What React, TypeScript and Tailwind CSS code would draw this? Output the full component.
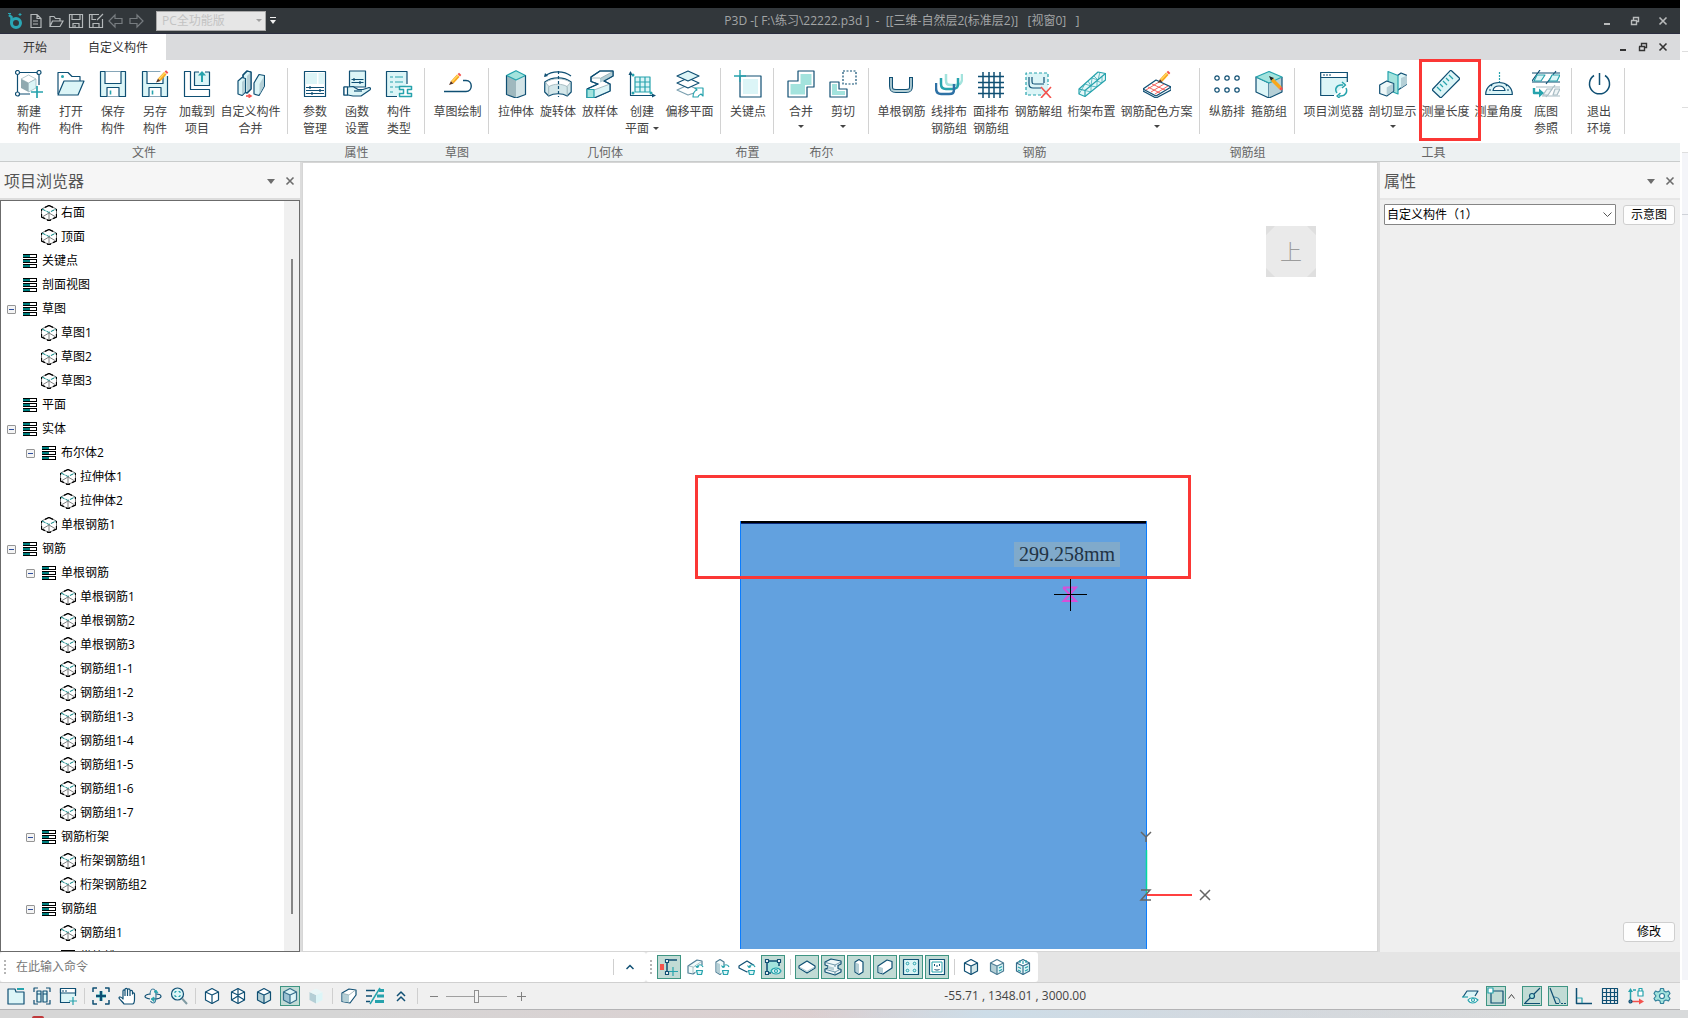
import { useState } from "react";
import type { ReactNode } from "react";
import clsx from "clsx";

const NAVY = "#0f4f73";
const TEAL = "#26a3ad";
const PALE = "#dcf5f7";
const MINT = "#a3e3dd";
const SHADE = "#b4cfd6";
const RED = "#f4524d";
const EDGE = "#8fa9b0";

type SvgProps = { size?: number; children: ReactNode };

const Svg = ({ size = 28, children }: SvgProps) => (
  <svg
    width={size}
    height={size}
    viewBox={`0 0 ${size} ${size}`}
    fill="none"
    stroke={NAVY}
    strokeWidth={1.2}
    strokeLinejoin="round"
    aria-hidden="true"
    className="shrink-0"
  >
    {children}
  </svg>
);

const Pencil = ({ x, y }: { x: number; y: number }) => (
  <g transform={`translate(${x} ${y})`} stroke="none">
    <path d="M0 12l2-4 2.500 2.500z" fill="#5b3524" />
    <path d="M2 8l6-6.500 2.500 2.500-6 6.500z" fill="#f9a61a" />
    <path d="M2.700 8l6-6.500 1 1-6 6.500z" fill="#ffd560" />
    <path d="M8.600 1l1.500-1.200 2.200 2.200-1.300 1.500z" fill={RED} />
  </g>
);

/* ---------- ribbon icons, 28 x 28 ---------- */

const SaveShape = () => (
  <>
    <path d="M1.500 1.500h25v25h-25z" fill={PALE} />
    <path d="M6 1.500v12h16v-12" fill="#fff" />
    <path d="M8 26.500v-9h12v9" fill="#fff" />
    <path d="M11.500 20.500v4" stroke={TEAL} strokeWidth={1.600} />
  </>
);

const ribbonIcons: Record<string, ReactNode> = {
  create: (
    <>
      <path d="M4.500 2.500h17.500M2.500 4.500v17.500M24 4.500V15M4.500 24H15" />
      <circle cx="2.500" cy="2.500" r="2" fill="#fff" />
      <circle cx="24" cy="2.500" r="2" fill="#fff" />
      <circle cx="2.500" cy="24" r="2" fill="#fff" />
      <path d="M6 9l7.500-4L21 9l-7.500 4z" fill="#fff" stroke="#9ab3ba" strokeWidth={0.700} />
      <path d="M6 9l7.500 4v9L6 18z" fill={EDGE} stroke="none" />
      <path d="M21 9l-7.500 4v9l7.500-4z" fill={PALE} stroke="#9ab3ba" strokeWidth={0.700} />
      <path d="M22 16v12M16 22h12" stroke={TEAL} strokeWidth={1.700} />
    </>
  ),
  open: (
    <>
      <path d="M1 24V2.500h10l4 4h8V11" fill="#fff" />
      <path d="M7 11h20l-6 14H1z" fill={PALE} />
      <circle cx="5.500" cy="6.500" r="1.500" fill={TEAL} stroke="none" />
    </>
  ),
  save: <SaveShape />,
  saveAs: (
    <>
      <SaveShape />
      <path d="M15 12l5-6h8V0h-8z" fill="#fff" stroke="none" />
      <Pencil x={15} y={0.500} />
    </>
  ),
  load: (
    <>
      <path d="M1.500 1.500h6v18h19v7h-25z" fill="#fff" />
      <path d="M16 2h-4.500v13.500h15V2H22" fill={PALE} />
      <path d="M19 12V4" stroke={TEAL} strokeWidth={2} />
      <path d="M15 5.500L19 1l4 4.500z" fill={TEAL} stroke="none" />
    </>
  ),
  combine: (
    <>
      <path d="M6 5l4-4 4 1v17l-4 4-4-1z" fill={PALE} />
      <path d="M10 6l4-4v17l-4 4z" fill={SHADE} stroke="none" />
      <path d="M6 5l4-4 4 1v17l-4 4-4-1z" />
      <path d="M1 11l4-3.500 3.500 1V22L5 25.500 1 24z" fill={PALE} />
      <path d="M5 12l3-3v13l-3 3z" fill={SHADE} stroke="none" />
      <path d="M17 13l5-8.500 5.500 1V16L22 25.500 17 24z" fill={PALE} />
      <path d="M22.500 14l4.500-7.500V16l-4.500 8.500z" fill={SHADE} stroke="none" />
      <path d="M9 26h4" stroke={RED} strokeWidth={1.600} />
      <path d="M11.500 23.500l4 2.500-4 2.500z" fill={RED} stroke="none" />
    </>
  ),
  params: (
    <>
      <path d="M3.500 1.500h21v25h-21z" fill="#fff" />
      <path d="M5 3h11v11H5zM17.500 3H23v11h-5.500z" fill={PALE} stroke="none" />
      <path d="M5 17.500h18M5 20.500h18M5 23.500h18M9 16v3M19 19v3M11 22v3" />
    </>
  ),
  func: (
    <>
      <path d="M6.500 1h16v16h-16z" fill={PALE} />
      <path d="M8.500 9.500h12M8.500 12.500h12M11 8v3M17 11v3" />
      <path d="M1 17h4l5-.500 5 3h5l6-2c2 0 2 2 0 3l-8 5.500H10L5 25H1z" fill={PALE} />
      <path d="M11 21h8" />
      <path d="M1 17h3.500v8H1z" fill="#fff" />
    </>
  ),
  types: (
    <>
      <path d="M22 14V1.500H1.500v25H12" fill={PALE} />
      <path d="M5 7h3M5 12h3M5 17h3M5 22h3M10 7h8M10 12h8M10 17h4" stroke={TEAL} />
      <path d="M14.500 16.500h12v3h-4v4h4v3h-12v-3h4v-4h-4z" fill="#fff" stroke={TEAL} strokeWidth={1.500} />
    </>
  ),
  sketch: (
    <>
      <path d="M0 21.500h22c7 0 7-11 0-11h-3" strokeWidth={1.400} />
      <Pencil x={5} y={3} />
    </>
  ),
  extrude: (
    <>
      <path d="M4.500 5.500L14 10v18.500l-9.500-4.500z" fill="#9fb8be" stroke="none" />
      <path d="M23.500 5.500L14 10v18.500l9.500-4.500z" fill="#d3e4e7" stroke="none" />
      <path d="M4.500 5.500L14 .700l9.500 4.800L14 10z" fill={MINT} stroke={TEAL} />
      <path d="M4.500 5.500v19L14 28l9.500-3.500v-19" />
    </>
  ),
  revolve: (
    <>
      <path d="M1 6C8 .500 20 .500 27 6" />
      <path d="M0 7l1-4 3 3z" fill={NAVY} stroke="none" />
      <path d="M.800 12C8 6.500 20 6.500 27.200 12v10l-4 4c-5-3-13-3-18.500 0l-4-4z" fill="#d4e7ea" />
      <path d="M1.500 12.500l3.500 4c5-3 13-3 18 0l3.500-4C20 7.500 8 7.500 1.500 12.500z" fill="#fff" stroke={EDGE} strokeWidth={0.700} />
      <path d="M4.700 16.500V26M23.200 16.500V26" stroke={EDGE} strokeWidth={0.800} />
      <path d="M14.500 1v26" strokeDasharray="3 2" />
    </>
  ),
  loft: (
    <>
      <path d="M1 19L12 14 5 11.500V7L14 1h13v5l-9 5 6 3v7L8 28H1z" fill="#fff" />
      <path d="M8 20l16-6v7L8 28z" fill={PALE} stroke="none" />
      <path d="M27 1.500L14 8.500v4l4-1.500 9-5z" fill={SHADE} stroke="none" />
      <path d="M8 20l16-6M14 8.500L27 1.500M5 8h9" stroke={EDGE} strokeWidth={0.800} />
      <path d="M1 19L12 14 5 11.500V7L14 1h13v5l-9 5 6 3v7L8 28" />
      <path d="M1 19.500h7v8H1z" fill={MINT} stroke={TEAL} />
    </>
  ),
  plane: (
    <>
      <path d="M2.500 2v23.500H27" />
      <path d="M.500 5l2-4 2 4zM24 23.500l4 2-4 2z" fill={NAVY} stroke="none" />
      <path d="M7 7h15v15H7z" fill={PALE} stroke="none" />
      <path d="M7 7h15v15H7zM12 7v15M17 7v15M7 12h15M7 17h15" stroke={TEAL} />
      <circle cx="5" cy="5" r="1.500" fill={TEAL} stroke="none" />
      <circle cx="5" cy="23" r="1.500" fill={TEAL} stroke="none" />
      <circle cx="23" cy="23" r="1.500" fill={TEAL} stroke="none" />
    </>
  ),
  offset: (
    <>
      <path d="M1 20l11-5 11 5-5 3-6 2z" fill="#fff" stroke="#7ba0b0" />
      <path d="M1 13l11-5 11 5-11 5z" fill="#fff" />
      <path d="M1 6l11-5 11 5-11 5z" fill={PALE} />
      <path d="M17 27c0-4 1-6 4-7l-2-2h8v8l-2-2c-2 1-3 2-3 3z" fill="#fff" stroke={TEAL} />
    </>
  ),
  keypoint: (
    <>
      <path d="M6 6h21v21H6z" fill="#fff" />
      <path d="M9 9h15v15H9z" fill={PALE} stroke="none" />
      <path d="M6 0v12M0 6h12" stroke={TEAL} strokeWidth={1.400} />
    </>
  ),
  union: (
    <>
      <path d="M11 1h16v16h-7v10H1V11h10z" fill="#fff" />
      <path d="M13.500 4h11v11H18v9.500H3.500V14h10z" fill={MINT} stroke="none" />
    </>
  ),
  subtract: (
    <>
      <path d="M14 1h13v13H14z" strokeDasharray="2 1.500" />
      <path d="M1 12h9v7h8v8H1z" fill="#fff" />
      <path d="M3 14h5v7h8v4H3z" fill={MINT} stroke="none" />
    </>
  ),
  singleBar: (
    <>
      <path d="M3 7v9c0 4 1 5 5 5h10c4 0 5-1 5-5V7" strokeWidth={4} />
      <path d="M3 8v8c0 4 1 5 5 5h10c4 0 5-1 5-5V8" stroke={SHADE} strokeWidth={1.800} />
    </>
  ),
  lineBars: (
    <>
      <path d="M11 4v6c0 4 1 5 5 5h4c5 0 6-1 7-5V4" stroke={MINT} strokeWidth={2.500} />
      <path d="M6 8v6c0 4 2 5 5 5h6c4 0 6-1 6-5V8" stroke={TEAL} strokeWidth={2.500} />
      <path d="M1 13v5c0 4 2 6 5 6h8c4 0 5-1 5-5v-5" stroke="#2d71a5" strokeWidth={2.500} />
    </>
  ),
  gridBars: (
    <path
      d="M6 2v26M12 2v26M17 2v26M23 2v26M1 6.500h26M1 12.500h26M1 17.500h26M1 23.500h26"
      strokeWidth={1.500}
    />
  ),
  ungroup: (
    <>
      <path d="M1 3h22v22H1z" fill={PALE} stroke="none" />
      <path d="M16 25H1V3h22v12" stroke={TEAL} strokeDasharray="3 2" />
      <path d="M4 7v7c0 3 1 4 4 4h8M7 7v4c0 3 1 3 3 3h9M19 7v6" />
      <path d="M16 17l10 11M26 17L16 28" stroke={RED} strokeWidth={1.600} />
    </>
  ),
  truss: (
    <>
      <path d="M1 19L20 2l7.500 1.500V10L7 26.500 1 24z" fill="#e6f7f8" stroke={TEAL} />
      <path d="M1 19l6 1.500L27.500 3.500M7 20.500v6" stroke={TEAL} />
      <path
        d="M7 20.500l6 1.500v-6l6 1v-6l5 2V7M1 24l6-10 6 2 1-8 6 2 2-8M10 11l3 5M16 6l4 4"
        stroke={TEAL}
        strokeWidth={0.700}
      />
    </>
  ),
  palette: (
    <>
      <path d="M0 19l13-9 15 7v3L13 28 0 21z" fill="#fff" />
      <path d="M0 19l13 7 15-9" />
      <path d="M5 17l12 6M9 14l13 6M3 20l13-8M8 22l13-8M12 24l13-8" stroke={RED} strokeWidth={0.900} />
      <Pencil x={15} y={1} />
    </>
  ),
  barRow: (
    <>
      {[4, 14, 24].map((x) => (
        <g key={x}>
          <circle cx={x} cy="8" r="2.200" />
          <circle cx={x} cy="20" r="2.200" />
        </g>
      ))}
    </>
  ),
  stirrup: (
    <>
      <path d="M1 7v15l13 6V13z" fill={PALE} />
      <path d="M27 7v15l-13 6V13z" fill={SHADE} stroke="none" />
      <path d="M27 7v15l-13 6" />
      <path d="M1 7l13-5.500L27 7l-13 6z" fill={MINT} stroke={TEAL} />
      <path d="M14 6l2 5 3-3z" fill="#222" stroke="none" />
      <path d="M16 11l8 8 2.500-2.500-8-8z" fill="#f9a61a" stroke="none" />
      <path d="M24 19l2.500-2.500L28 19l-2 1.500z" fill={RED} stroke="none" />
    </>
  ),
  browser: (
    <>
      <path d="M14 25.500H.700V2.500h26.600V12" fill={PALE} />
      <path d="M.700 2.500h26.600v5H.700z" fill="#fff" />
      <path d="M3 5h2M6 5h2M9 5h2" />
      <path d="M17 23c-3-4 0-8 4-8h2M26 18c2 4-1 8-5 8h-2" stroke={TEAL} strokeWidth={1.500} />
      <path d="M22 12l3.500 3-3.500 3M20.500 23L17 26l3.500 3" stroke={TEAL} strokeWidth={1.500} />
    </>
  ),
  section: (
    <>
      <path d="M15 8l7-5 6 2.500V14l-9 6-4-2z" fill={PALE} />
      <path d="M22 8l6-2.500V14l-6 4z" fill={SHADE} stroke="none" />
      <path d="M9 1.500l10 4V24L9 20z" fill={MINT} stroke={TEAL} />
      <path d="M.700 15l7-4 7 2.500V21l-7 5-7-2.500z" fill="#eef7f8" />
      <path d="M7.700 17.500l6.500-4V21l-6.500 4.500z" fill={SHADE} stroke="none" />
    </>
  ),
  ruler: (
    <>
      <path d="M19.500.800L27.300 8c.500.500.500 1 0 1.500L9.500 27.300c-.500.500-1 .500-1.500 0L.800 20.500c-.500-.500-.500-1 0-1.500L18 .800c.500-.400 1-.400 1.500 0z" fill={PALE} />
      <path d="M5 17l4 4M8 14l3 3M11 11l4 4M14 8l3 3M17 5l4 4" stroke={TEAL} />
    </>
  ),
  protractor: (
    <>
      <path d="M.700 24.500c0-16 26.600-16 26.600 0z" fill={PALE} />
      <path d="M8 20.500c1-6 11-6 12 0z" fill="#fff" />
      <path d="M14.500 2v10" strokeDasharray="2 1" stroke={TEAL} />
      <path d="M4 20h2M22 20h2M6 15l1 1M21 16l1-1" />
    </>
  ),
  underlay: (
    <>
      <path d="M0 3h28M0 12h28M0 11L8 0M14 14L24 1" />
      <path d="M5 5h8l-4 6H2zM20 5h8l-3 6h-8z" fill={PALE} stroke={TEAL} />
      <path d="M4 17h24M10 26h18M14 27l9-12" stroke="#a8bcc4" />
      <path d="M15 19h5l-4 6h-5zM23 19h5l-3 6h-4z" fill="#eef4f5" stroke="#a8bcc4" />
      <path d="M2 18v5h6" stroke={TEAL} strokeWidth={2.400} />
      <path d="M7 18.500l5 4.500-5 4.500z" fill={TEAL} stroke="none" />
    </>
  ),
  exit: (
    <>
      <path d="M9 5.500a10 10 0 1 0 11 0" strokeWidth={1.500} />
      <path d="M14.500 3v12" strokeWidth={1.500} />
    </>
  ),
};

/* ---------- small icons, 18 x 18 ---------- */

type CubeProps = { top?: string; left?: string; right?: string; stroke?: string };

const CubeShape = ({ top = "#fff", left = "#fff", right = "#fff", stroke = NAVY }: CubeProps) => (
  <g stroke={stroke}>
    <path d="M2.500 5v8L9 16.500V8z" fill={left} stroke="none" />
    <path d="M15.500 5v8L9 16.500V8z" fill={right} stroke="none" />
    <path d="M2.500 5L9 1.500 15.500 5 9 8z" fill={top} stroke="none" />
    <path d="M2.500 5L9 1.500 15.500 5v8L9 16.500 2.500 13z" />
    <path d="M2.500 5L9 8l6.500-3M9 8v8.500" />
  </g>
);

const Refresh = () => (
  <g stroke={TEAL}>
    <path d="M11 9c1-3 5-3 6 0M9.500 7.500l1.500 2 2-1" />
    <path d="M10.500 12.500h6l-1 4h-4z" fill={PALE} />
  </g>
);

const smallIcons: Record<string, ReactNode> = {
  axisEdit: (
    <>
      <path d="M0 6h4v6H0z" fill={RED} stroke="none" />
      <path d="M7 3v12M9 2h8" strokeWidth={1.500} />
      <path d="M5.500 1.500h3v3h-3zM5.500 13.500h3v3h-3z" fill="#fff" />
      <path d="M13 9v9M9 13.500h9" stroke={TEAL} />
    </>
  ),
  wallRefresh: (
    <>
      <path d="M2 8l9-6 5 1v7l-9 6-5-1z" fill="#f2fafa" stroke="#4d7d95" />
      <path d="M2.500 8l5 1 8-5.500M7 9v6" stroke={EDGE} strokeWidth={0.700} />
      <path d="M9.500 7H18v11H9.500z" fill="#fff" stroke="none" />
      <Refresh />
    </>
  ),
  columnRefresh: (
    <>
      <path d="M4 4l4-2.500L12 4v10l-4 2.500L4 14z" fill="#f2fafa" stroke="#4d7d95" />
      <path d="M4.500 4.500L8 6v10l-3.500-2z" fill={SHADE} stroke="none" />
      <path d="M9.500 7H18v11H9.500z" fill="#fff" stroke="none" />
      <Refresh />
    </>
  ),
  slabRefresh: (
    <>
      <path d="M1 8l8-5 8 5v1l-8 5-8-4z" fill="#fff" />
      <path d="M9.500 7H18v11H9.500z" fill="#fff" stroke="none" />
      <Refresh />
    </>
  ),
  frameView: (
    <>
      <path d="M3 3h12v12H3z" fill={MINT} stroke="none" />
      <path d="M3 4v10M4 3h10M15 4v4M4 15h3" strokeWidth={1.500} />
      <path d="M1.500 1.500h3v3h-3zM13.500 1.500h3v3h-3zM1.500 13.500h3v3h-3z" fill="#fff" />
      <path d="M7 13c2-4 8-4 10 0-2 4-8 4-10 0z" fill={PALE} stroke={TEAL} />
      <circle cx="12" cy="13" r="1.500" stroke={TEAL} />
    </>
  ),
  slab: (
    <>
      <path d="M1 8l8-5 8 5v2l-8 5-8-5z" fill="#fff" />
      <path d="M2 9.500l7 4 7-4" stroke={SHADE} />
    </>
  ),
  beam: (
    <>
      <path d="M1 4l6-3 10 2v3l-3 1.500v3l3 1V14l-6 3-10-3v-3l3-1V8L1 7z" fill="#eef7f8" />
      <path d="M4 8l6 1.500v3L4 11z" fill={SHADE} stroke="none" />
      <path d="M1.500 4.500L11 7l6-3M11 7v2M2 11.500l9 2.500 6-3M11 14v3" stroke="#4d7d95" strokeWidth={0.800} />
    </>
  ),
  column: (
    <>
      <path d="M5 4l4-2.500L13 4v10l-4 2.500L5 14z" fill="#fff" />
      <path d="M5.600 4.500L9 6v10l-3.400-2.300z" fill={SHADE} stroke="none" />
    </>
  ),
  wall: (
    <>
      <path d="M2 8l9-6 5 1.500V10l-9 6-5-1.500z" fill="#fff" />
      <path d="M2.600 8.500L7 10v5.500l-4.400-1.400z" fill={SHADE} stroke="none" />
    </>
  ),
  nodes: (
    <>
      <path d="M1.500 1.500h15v15h-15z" fill={PALE} />
      {[5.5, 12.5].map((x) => (
        <g key={x} stroke={TEAL} strokeWidth={1}>
          <circle cx={x} cy="5.500" r="1.300" />
          <circle cx={x} cy="12.500" r="1.300" />
        </g>
      ))}
    </>
  ),
  rebarBox: (
    <>
      <path d="M1.500 1.500h15v15h-15z" fill="#fff" />
      <path d="M4 4h10v10H4z" stroke={TEAL} strokeWidth={1} />
      <path d="M6.500 6v2M11.500 6v2M9 7v2M6.500 11l1 1h3l1-1" strokeWidth={1} />
    </>
  ),
  cubePlain: <CubeShape right="#d6e8ea" />,
  cubeShaded: (
    <>
      <CubeShape top="#fff" left={SHADE} right={PALE} stroke="#4d7d95" />
      <path d="M11 10l3-1.500M11 13l3-1.500" stroke={TEAL} />
    </>
  ),
  cubeRebar: (
    <>
      <CubeShape top="#fff" left="#e6f2f4" right={PALE} stroke="#356f8c" />
      <path d="M6 2v3M9 3v3M12 2v3M11 10l3-1.500M11 13l3-1.500M4 9l3 1.500M4 12l3 1.500" stroke={TEAL} />
    </>
  ),
  cubeOutline: <CubeShape />,
  cubeWire: (
    <>
      <CubeShape />
      <path d="M9 1.500V8M2.500 13L9 9l6.500 4" />
    </>
  ),
  cubeHidden: <CubeShape left={SHADE} right="#d6e8ea" />,
  cubeActive: <CubeShape left="#9cc3d3" top={PALE} right={PALE} stroke="#356f8c" />,
  cubeSolid: <CubeShape top="#e8f6f7" left={SHADE} right={PALE} stroke="none" />,
  tabWindow: (
    <>
      <path d="M1 2h7l1 3h8v12H1z" fill={PALE} />
      <path d="M10 2h7" stroke={TEAL} strokeWidth={2} />
    </>
  ),
  tileWindow: (
    <>
      <path d="M4 4h4v11H4zM10 4h4v11h-4z" fill={PALE} />
      <path d="M1 5V1h4M13 1h4v4M1 13v4h4M17 13v4h-4M4 7h4M10 7h4" />
    </>
  ),
  addWindow: (
    <>
      <path d="M11 15.500H1.500v-14h15V9" fill={PALE} />
      <path d="M1.500 1.500h15V6h-15z" fill="#fff" />
      <path d="M3 4h2M6 4h2" />
      <path d="M14 10v8M10 14h8" stroke={TEAL} />
    </>
  ),
  fit: (
    <>
      <path d="M1 5V1h4M13 1h4v4M1 13v4h4M17 13v4h-4" strokeWidth={1.500} />
      <path d="M9 4v10M4 9h10" stroke={TEAL} strokeWidth={3} />
      <path d="M9 4v10M4 9h10" strokeWidth={2} />
    </>
  ),
  hand: (
    <path
      d="M6 17c-1-2-4-4-5-6 0-1.500 2-1.500 4 1V4c0-1.500 2-1.500 2 0V2.500c0-1.500 2.500-1.500 2.500 0V3c0-1.500 2.500-1.500 2.500 0v1.500c0-1.500 2.500-1.500 2.500 0V7c0-1.500 2-1.500 2 0v5c0 3-1 5-2 5zM7 4v5M9.500 3v6M12 4v5"
      fill="#fff"
    />
  ),
  orbit: (
    <>
      <path d="M6 12c-3-.500-5-1-5-2.500S4 7 6 7M12 7c3 0 5 1 5 2.500S13 12 9 12" />
      <path d="M6 8c0-3 1-6 3-6s3 3 3 7-1 7-2.500 7S7 15 6.500 14" stroke="#3e7e9c" />
      <path d="M10 10l-3 2 3 2.500zM10 5l2-2 2 3z" fill={TEAL} stroke={TEAL} strokeWidth={0.800} />
    </>
  ),
  zoom: (
    <>
      <circle cx="7.500" cy="7" r="6" fill={PALE} />
      <path d="M12 11.500l5 5.500" stroke="#7f9aa2" strokeWidth={2} />
      <path d="M5 4.500h1.500M5 4.500V6M10 4.500H8.500M10 4.500V6M5 9.500h1.500M5 9.500V8M10 9.500H8.500M10 9.500V8" stroke={TEAL} />
    </>
  ),
  clip: (
    <>
      <path d="M2 6l7-4 7 1v5l-6 8-8-1.500z" fill="#fff" />
      <path d="M2.500 6.500L9 8v7.500l-6.500-1z" fill={SHADE} stroke="none" />
      <path d="M2.500 6.300L9 8l6.500-5" stroke={EDGE} strokeWidth={0.800} />
    </>
  ),
  filter: (
    <>
      <path d="M0 3.500h9M0 9h6M0 14.500h4" strokeWidth={1.500} />
      <path d="M13 3.500h5M11 9h7M9 14.500h9" stroke={TEAL} strokeWidth={3} />
      <path d="M14 1L4 17" stroke={TEAL} strokeWidth={1.500} />
    </>
  ),
  collapse: <path d="M5 9l4-4 4 4M5 14l4-4 4 4" strokeWidth={1.500} />,
  workplane: (
    <>
      <path d="M2 10l4-6h11l-3 5" fill={PALE} />
      <path d="M1 10h6" stroke={TEAL} />
      <path d="M7 13c2-3 7-3 10 0-3 4-8 4-10 0z" fill="#fff" stroke={TEAL} />
      <circle cx="12" cy="13" r="1.500" stroke={TEAL} />
    </>
  ),
  snapCorner: (
    <>
      <path d="M4 4h12v12H4z" />
      <path d="M1 1h5v5H1z" fill="#fff" stroke={TEAL} />
    </>
  ),
  snapPoint: (
    <>
      <path d="M1 16.500h16M2 16l5-5M11 7l6-6" />
      <circle cx="9" cy="9" r="2.500" fill={MINT} />
    </>
  ),
  snapAngle: (
    <>
      <path d="M1 1l6 15.500h3M12 16.500h2M15 16.500h2" />
      <path d="M5 10c4 0 6 2 6 6" stroke="#3a7f9e" />
    </>
  ),
  ortho: (
    <>
      <path d="M1.500 1v15.500H17" strokeWidth={1.500} />
      <path d="M2 11h5v5" stroke={TEAL} />
    </>
  ),
  grid: <path d="M1.500 1.500h15v15h-15zM5.500 1v16M9.500 1v16M13.500 1v16M1 5.500h16M1 9.500h16M1 13.500h16" />,
  lockAxis: (
    <>
      <path d="M3.500 13V4M6 3h3" stroke={TEAL} strokeWidth={1.500} />
      <path d="M1 5l2.500-4L6 5z" fill={TEAL} stroke="none" />
      <path d="M5 14.500h8" stroke={RED} strokeWidth={1.500} />
      <path d="M12 11.500l5 3-5 3z" fill={RED} stroke="none" />
      <circle cx="3.500" cy="14.500" r="1.500" fill="#4a8ea8" />
      <path d="M11 4h5v5h-5zM12 4V1.500h3V4" fill="#fff" stroke={TEAL} />
    </>
  ),
  gear: (
    <>
      <path d="M7.500 1.500h3l.500 2.500 2 1 2.500-1 1.500 2.500L15 9l2 2.500-1.500 2.500-2.500-1-2 1-.500 2.500h-3L7 14l-2-1-2.500 1L1 11.500 3 9 1 6.500 2.500 4 5 5l2-1z" fill={MINT} stroke="#2f7f9a" />
      <circle cx="9" cy="9" r="2.500" fill="#fff" stroke="#2f7f9a" />
    </>
  ),
};

/* ---------- title bar ---------- */

const quickActions = [
  { label: "新建", path: "M3 1.500h6l4 4v9H3zM9 1.500v4h4M5 8h5M5 11h5" },
  { label: "打开", path: "M2 13.500v-10h4l1.500 2H12V8M4.500 8H15l-3 5.500H2z" },
  { label: "保存", path: "M1.500 1.500h13v13h-13zM4 1.500v5h8v-5M5 14.500v-4h6v4M7 12v2" },
  { label: "另存为", path: "M11 1.500H1.500v13h13V6M4 1.500v5h4M5 14.500v-4h6v4M15 1L9 7" },
  { label: "撤销", path: "M7 2L1 8l6 6v-3.500h7v-5H7z", dim: true },
  { label: "重做", path: "M9 2l6 6-6 6v-3.500H2v-5h7z", dim: true },
];

const WindowButtons = ({ className, gap }: { className: string; gap: string }) => (
  <div className={clsx("ml-auto flex items-center", gap, className)}>
    <button aria-label="最小化">
      <svg width="10" height="10" viewBox="0 0 10 10" fill="currentColor">
        <path d="M2 7h6v2H2z" />
      </svg>
    </button>
    <button aria-label="还原">
      <svg width="10" height="10" viewBox="0 0 10 10" fill="none" stroke="currentColor">
        <path d="M1 4.500h5.500v4H1.500v-4M3.500 4V1.500h5v4H7" strokeWidth="1.400" />
      </svg>
    </button>
    <button aria-label="关闭">
      <svg width="10" height="10" viewBox="0 0 10 10" fill="none" stroke="currentColor">
        <path d="M1.500 1.500l7 7M8.500 1.500l-7 7" strokeWidth="1.600" />
      </svg>
    </button>
  </div>
);

const TitleBar = () => (
  <header className="flex h-[26px] shrink-0 items-center border-b border-[#2b2d3f] bg-[#32373b] pr-3">
    <div className="flex w-[43%] items-center pl-1.5">
      <svg width="18" height="18" viewBox="0 0 18 18" fill="none" aria-hidden="true">
        <circle cx="10" cy="11" r="4.500" stroke="#2aa7b5" strokeWidth="3" />
        <path d="M5.500 11V5L3 3" stroke="#2aa7b5" strokeWidth="2.500" />
        <path d="M2 1.500h3M14 1v3M12.500 2.500h3" stroke="#2aa7b5" />
      </svg>
      <div className="ml-1 flex gap-1">
        {quickActions.map((action) => (
          <button key={action.label} aria-label={action.label}>
            <svg
              width="16"
              height="16"
              viewBox="0 0 16 16"
              fill="none"
              stroke={action.dim ? "#777c80" : "#b4b8ba"}
              strokeWidth="1.200"
            >
              <path d={action.path} />
            </svg>
          </button>
        ))}
      </div>
      <div className="relative ml-3">
        <select
          aria-label="版本"
          disabled
          className="block h-5 w-[110px] appearance-none border border-[#a9a9a9] bg-[#e6e6e6] pl-[5px] text-xs leading-[18px] text-[#c3c3c3] opacity-100"
        >
          <option>PC全功能版</option>
        </select>
        <span className="pointer-events-none absolute top-2 right-1 border-x-3 border-t-3 border-x-transparent border-t-[#a0a0a0]" />
      </div>
      <button aria-label="自定义快速访问工具栏" className="ml-1">
        <svg width="6" height="8" viewBox="0 0 6 8" fill="#f0f0f0">
          <path d="M0 0h6v1H0zM0 3h6L3 7z" />
        </svg>
      </button>
    </div>
    <h1 className="pl-1 text-xs whitespace-pre text-[#a3a5a6]">
      {" P3D -[ F:\\练习\\22222.p3d ]  -  [[三维-自然层2(标准层2)]   [视窗0]   ]"}
    </h1>
    <WindowButtons className="text-[#b9bbbc]" gap="gap-[18px]" />
  </header>
);

/* ---------- ribbon ---------- */

type RibbonItem = { icon: string; lines: string[]; arrow?: boolean; marked?: boolean };

const ribbonGroups: { title: string; items: RibbonItem[] }[] = [
  {
    title: "文件",
    items: [
      { icon: "create", lines: ["新建", "构件"] },
      { icon: "open", lines: ["打开", "构件"] },
      { icon: "save", lines: ["保存", "构件"] },
      { icon: "saveAs", lines: ["另存", "构件"] },
      { icon: "load", lines: ["加载到", "项目"] },
      { icon: "combine", lines: ["自定义构件", "合并"] },
    ],
  },
  {
    title: "属性",
    items: [
      { icon: "params", lines: ["参数", "管理"] },
      { icon: "func", lines: ["函数", "设置"] },
      { icon: "types", lines: ["构件", "类型"] },
    ],
  },
  { title: "草图", items: [{ icon: "sketch", lines: ["草图绘制"] }] },
  {
    title: "几何体",
    items: [
      { icon: "extrude", lines: ["拉伸体"] },
      { icon: "revolve", lines: ["旋转体"] },
      { icon: "loft", lines: ["放样体"] },
      { icon: "plane", lines: ["创建", "平面"], arrow: true },
      { icon: "offset", lines: ["偏移平面"] },
    ],
  },
  { title: "布置", items: [{ icon: "keypoint", lines: ["关键点"] }] },
  {
    title: "布尔",
    items: [
      { icon: "union", lines: ["合并"], arrow: true },
      { icon: "subtract", lines: ["剪切"], arrow: true },
    ],
  },
  {
    title: "钢筋",
    items: [
      { icon: "singleBar", lines: ["单根钢筋"] },
      { icon: "lineBars", lines: ["线排布", "钢筋组"] },
      { icon: "gridBars", lines: ["面排布", "钢筋组"] },
      { icon: "ungroup", lines: ["钢筋解组"] },
      { icon: "truss", lines: ["桁架布置"] },
      { icon: "palette", lines: ["钢筋配色方案"], arrow: true },
    ],
  },
  {
    title: "钢筋组",
    items: [
      { icon: "barRow", lines: ["纵筋排"] },
      { icon: "stirrup", lines: ["箍筋组"] },
    ],
  },
  {
    title: "工具",
    items: [
      { icon: "browser", lines: ["项目浏览器"] },
      { icon: "section", lines: ["剖切显示"], arrow: true },
      { icon: "ruler", lines: ["测量长度"], marked: true },
      { icon: "protractor", lines: ["测量角度"] },
      { icon: "underlay", lines: ["底图", "参照"] },
    ],
  },
  { title: "", items: [{ icon: "exit", lines: ["退出", "环境"] }] },
];

const itemWidth = (label: string) => {
  if (label.length >= 6) return "w-[77px]";
  if (label.length === 5) return "w-[65px]";
  if (label.length === 4) return "w-[53px]";
  return "w-[42px]";
};

const Caret = () => (
  <span className="inline-block border-x-3 border-t-3 border-x-transparent border-t-[#444]" />
);

const RibbonButton = ({ item }: { item: RibbonItem }) => (
  <button
    className={clsx(
      "relative flex flex-col items-center text-xs leading-[17px] whitespace-nowrap text-[#444]",
      itemWidth(item.lines[0])
    )}
  >
    <Svg>{ribbonIcons[item.icon]}</Svg>
    <span className="mt-[5px]">{item.lines[0]}</span>
    {item.lines[1] && (
      <span className="flex items-center gap-1">
        {item.lines[1]}
        {item.arrow && <Caret />}
      </span>
    )}
    {!item.lines[1] && item.arrow && (
      <span className="flex h-3 items-center">
        <Caret />
      </span>
    )}
    {item.marked && (
      <span className="absolute -top-[11px] left-0 z-10 h-[82px] w-[62px] border-3 border-[#fb3735]" />
    )}
  </button>
);

const Ribbon = () => (
  <div className="flex h-[102px] shrink-0 border-b border-[#c9cccc] bg-white">
    {ribbonGroups.map((group, index) => (
      <section key={index} className="flex flex-col">
        <div className="flex h-[83px] pt-2">
          <div
            className={clsx(
              "flex h-[66px] items-start border-r border-[#d2d2d2] pt-0.5 pr-1",
              index === 0 ? "pl-2" : "pl-1.5"
            )}
          >
            {group.items.map((item) => (
              <RibbonButton key={item.lines.join("")} item={item} />
            ))}
          </div>
        </div>
        <h2 className="h-[18px] bg-[#edf1f2] text-center text-xs leading-5 text-[#666]">
          {group.title}
        </h2>
      </section>
    ))}
    <div className="flex flex-1 flex-col justify-end">
      <div className="h-[18px] bg-[#edf1f2]" />
    </div>
  </div>
);

/* ---------- panels ---------- */

const PanelHeader = ({ title }: { title: string }) => (
  <div className="flex h-9 shrink-0 items-center bg-[#f6f6f6] pt-0.5 pr-px pl-1">
    <h2 className="text-base text-[#555]">{title}</h2>
    <button aria-label="选项" className="ml-auto p-1">
      <span className="block border-x-4 border-t-5 border-x-transparent border-t-[#6d6d6d]" />
    </button>
    <button aria-label="关闭" className="ml-0.5 p-1">
      <svg width="10" height="10" viewBox="0 0 10 10" stroke="#6d6d6d" strokeWidth="1.600">
        <path d="M1.500 1.500l7 7M8.500 1.500l-7 7" />
      </svg>
    </button>
  </div>
);

type Node = { label: string; level: number; folder?: boolean; open?: boolean };

const tree: Node[] = [
  { label: "右面", level: 1 },
  { label: "顶面", level: 1 },
  { label: "关键点", level: 0, folder: true },
  { label: "剖面视图", level: 0, folder: true },
  { label: "草图", level: 0, folder: true, open: true },
  { label: "草图1", level: 1 },
  { label: "草图2", level: 1 },
  { label: "草图3", level: 1 },
  { label: "平面", level: 0, folder: true },
  { label: "实体", level: 0, folder: true, open: true },
  { label: "布尔体2", level: 1, folder: true, open: true },
  { label: "拉伸体1", level: 2 },
  { label: "拉伸体2", level: 2 },
  { label: "单根钢筋1", level: 1 },
  { label: "钢筋", level: 0, folder: true, open: true },
  { label: "单根钢筋", level: 1, folder: true, open: true },
  { label: "单根钢筋1", level: 2 },
  { label: "单根钢筋2", level: 2 },
  { label: "单根钢筋3", level: 2 },
  { label: "钢筋组1-1", level: 2 },
  { label: "钢筋组1-2", level: 2 },
  { label: "钢筋组1-3", level: 2 },
  { label: "钢筋组1-4", level: 2 },
  { label: "钢筋组1-5", level: 2 },
  { label: "钢筋组1-6", level: 2 },
  { label: "钢筋组1-7", level: 2 },
  { label: "钢筋桁架", level: 1, folder: true, open: true },
  { label: "桁架钢筋组1", level: 2 },
  { label: "桁架钢筋组2", level: 2 },
  { label: "钢筋组", level: 1, folder: true, open: true },
  { label: "钢筋组1", level: 2 },
  { label: "纵筋排", level: 2, folder: true },
];

const indent = ["pl-1.5", "pl-[25px]", "pl-11"];

const FolderIcon = () => (
  <svg width="14" height="14" viewBox="0 0 14 14" aria-hidden="true">
    <path d="M0 0h14v4H0zM0 5h14v4H0zM0 10h14v4H0z" fill="#000" />
    <path d="M7 1h6v2H7zM7 6h6v2H7zM7 11h6v2H7z" fill="#fff" />
    <path d="M0 1h7v2H0zM0 6h7v2H0zM0 11h7v2H0z" fill="#008080" />
  </svg>
);

const LeafIcon = () => (
  <svg width="16" height="16" viewBox="0 0 16 16" fill="none" aria-hidden="true">
    <path d="M.500 4L8 .500 15.500 4v8L8 15.500.500 12z" stroke="#707070" />
    <path d="M4 2.300L8 .500l4 1.800M.500 9v3L4 13.700M15.500 9v3L12 13.700M.500 4v2M15.500 4v2M6 15l2 .500 2-.500" stroke="#000" strokeWidth="1.300" />
    <path d="M1 4l7 3.500L15 4" stroke="#008080" strokeDasharray="4 1" />
    <path d="M8 7.500V15M8 8l-6 3.500M8 8l6 3.500" stroke="#808080" />
  </svg>
);

const ProjectBrowser = () => (
  <aside className="flex w-[300px] shrink-0 flex-col">
    <PanelHeader title="项目浏览器" />
    <div className="mt-0.5 flex min-h-0 flex-1 border border-[#6b6b6b] bg-white">
      <ul className="min-w-0 flex-1 overflow-hidden">
        {tree.map((node, index) => (
          <li
            key={index}
            className={clsx("flex h-6 items-center text-xs leading-6 text-black", indent[node.level])}
          >
            <span className="flex w-[9px]">
              {node.open && (
                <button
                  aria-label={`收起 ${node.label}`}
                  className="flex h-[9px] w-[9px] items-center justify-center rounded-[1px] border border-[#959595] bg-[#f4f4f4]"
                >
                  <span className="h-px w-[5px] bg-[#2f4f9e]" />
                </button>
              )}
            </span>
            <span className="ml-1.5 flex w-4 justify-center">
              {node.folder ? <FolderIcon /> : <LeafIcon />}
            </span>
            <span className="ml-1">{node.label}</span>
          </li>
        ))}
      </ul>
      <div className="w-[15px] bg-[#f0f0f0] pt-[58px] pb-[37px] pl-[7px]">
        <div className="h-full w-0.5 bg-[#858585]" />
      </div>
    </div>
  </aside>
);

const Viewport = () => (
  <main className="relative ml-0.5 min-w-0 flex-1 overflow-hidden border border-[#d6d6d6] bg-white">
    {/* view cube */}
    <button className="absolute top-[63px] right-[61px] flex h-[51px] w-[50px] items-center justify-center bg-[#eaeaea] text-[22px] text-[#9c9c9c]">
      <svg className="absolute inset-0" width="50" height="51" viewBox="0 0 50 51" fill="#dfdfdf">
        <path d="M0 0h9L0 9zM50 0v9l-9-9zM0 51v-9l9 9zM50 51h-9l9-9z" />
      </svg>
      <span className="relative font-light">上</span>
    </button>

    {/* solid seen from above */}
    <div className="absolute top-[358px] bottom-0.5 left-[437px] w-[407px] border-x border-[#0a7cff] bg-[#62a1df]">
      <div className="h-[3px] border-b border-[#0b2a7c] bg-black" />
      <div className="absolute top-[21px] left-[273px] bg-[#80aacb] px-[5px] font-['Liberation_Serif',serif] text-xl leading-[25px] text-[#1f3345]">
        299.258mm
      </div>
      <svg className="absolute top-14 left-[312px]" width="34" height="34" viewBox="0 0 34 34" fill="none">
        <path d="M10 10.500h13L10.500 24H23L10 10.500" stroke="#d84fd8" strokeWidth="2" />
        <path d="M17.500 1v33M1 17.500h33" stroke="#000" />
      </svg>
    </div>

    {/* measured edge */}
    <div className="absolute top-[312px] left-[392px] h-[104px] w-[496px] border-3 border-[#fb3735]" />

    {/* axes */}
    <svg
      className="absolute top-[662px] left-[830px]"
      width="90"
      height="80"
      viewBox="0 0 90 80"
      fill="none"
      strokeWidth="1.500"
    >
      <path d="M13.500 25v45" stroke="#00d9a0" />
      <path d="M14 70h45" stroke="#f00" />
      <path d="M8 7l5 5 5-5M13 12v5M8 65h9l-9 10h10M67 65l10 10M77 65L67 75" stroke="#666" />
    </svg>
  </main>
);

const PanelButton = ({ children }: { children: ReactNode }) => (
  <button className="h-5 w-[52px] rounded-[3px] border border-[#cfcfcf] bg-[#fdfdfd] text-xs leading-[18px] text-black">
    {children}
  </button>
);

const Properties = () => (
  <aside className="ml-0.5 flex w-[300px] shrink-0 flex-col bg-[#efefef]">
    <PanelHeader title="属性" />
    <div className="h-0.5 bg-[#e6e6e6]" />
    <div className="flex items-center gap-[7px] pt-1 pr-[5px] pl-1">
      <div className="relative flex-1">
        <select
          aria-label="构件"
          className="block h-[21px] w-full appearance-none rounded-[1px] border border-[#858585] bg-white pl-0.5 text-xs leading-[19px] text-black"
        >
          <option>自定义构件（1）</option>
        </select>
        <svg
          className="pointer-events-none absolute top-2 right-1"
          width="9"
          height="6"
          viewBox="0 0 9 6"
          fill="none"
          stroke="#555"
        >
          <path d="M.500.500l4 4 4-4" />
        </svg>
      </div>
      <PanelButton>示意图</PanelButton>
    </div>
    <div className="mt-auto flex justify-end pr-[5px] pb-2.5">
      <PanelButton>修改</PanelButton>
    </div>
  </aside>
);

/* ---------- bottom bars ---------- */

type ToolProps = { icon: string; active?: boolean; large?: boolean };

const Tool = ({ icon, active, large }: ToolProps) => (
  <button
    aria-label={icon}
    aria-pressed={!!active}
    className={clsx(
      "flex items-center justify-center border",
      large ? "h-6 w-6" : "h-5 w-5",
      active ? "border-[#3f9583] bg-[#c1dbd5]" : "border-transparent"
    )}
  >
    <Svg size={18}>{smallIcons[icon]}</Svg>
  </button>
);

const Grip = () => (
  <span className="flex flex-col gap-0.5">
    {[0, 1, 2, 3].map((dot) => (
      <span key={dot} className="h-0.5 w-0.5 bg-[#b5b5b5]" />
    ))}
  </span>
);

const Divider = () => <span className="h-4 w-px bg-[#cfcfcf]" />;

const CommandBar = () => {
  const [command, setCommand] = useState("");

  return (
    <div className="flex h-[30px] shrink-0 bg-[#e5e5e5]">
      <div className="flex w-[646px] items-center rounded-[3px] bg-white pl-1">
        <Grip />
        <input
          aria-label="命令"
          placeholder="在此输入命令"
          value={command}
          onChange={(e) => setCommand(e.target.value)}
          className="ml-2.5 min-w-0 flex-1 bg-transparent text-xs text-[#444] outline-none placeholder:text-[#777]"
        />
        <Divider />
        <button aria-label="展开" className="px-3">
          <svg width="8" height="6" viewBox="0 0 8 6" fill="none" stroke={NAVY} strokeWidth="1.500">
            <path d="M.500 5L4 1.500 7.500 5" />
          </svg>
        </button>
      </div>
      <div className="flex items-center gap-0.5 rounded-[3px] bg-white pr-[3px] pl-1">
        <Grip />
        <span className="w-px" />
        <Tool large icon="axisEdit" active />
        <Tool large icon="wallRefresh" />
        <Tool large icon="columnRefresh" />
        <Tool large icon="slabRefresh" />
        <Tool large icon="frameView" active />
        <span className="flex w-1.5 justify-center">
          <Divider />
        </span>
        <Tool large icon="slab" active />
        <Tool large icon="beam" active />
        <Tool large icon="column" active />
        <Tool large icon="wall" active />
        <Tool large icon="nodes" active />
        <Tool large icon="rebarBox" active />
        <span className="flex w-1.5 justify-center">
          <Divider />
        </span>
        <Tool large icon="cubePlain" />
        <Tool large icon="cubeShaded" />
        <Tool large icon="cubeRebar" />
      </div>
    </div>
  );
};

const StatusBar = () => (
  <footer className="flex h-7 shrink-0 items-center border-y border-t-[#d0d0d0] border-b-[#b3b3b5] bg-[#f0f0f0] pr-2">
    <div className="flex w-[56%] items-center gap-1.5 pl-1.5">
      <Tool icon="tabWindow" />
      <Tool icon="tileWindow" />
      <Tool icon="addWindow" />
      <Divider />
      <Tool icon="fit" />
      <Tool icon="hand" />
      <Tool icon="orbit" />
      <Tool icon="zoom" />
      <Divider />
      <Tool icon="cubeOutline" />
      <Tool icon="cubeWire" />
      <Tool icon="cubeHidden" />
      <Tool icon="cubeActive" active />
      <Tool icon="cubeSolid" />
      <Divider />
      <Tool icon="clip" />
      <Tool icon="filter" />
      <Tool icon="collapse" />
      <Divider />
      <div className="ml-1.5 flex items-center gap-2">
        <button aria-label="缩小" className="flex h-4 w-2 items-center">
          <span className="h-px w-2 bg-[#808080]" />
        </button>
        <input
          type="range"
          aria-label="缩放"
          defaultValue={50}
          className="h-4 w-[61px] appearance-none bg-transparent [&::-webkit-slider-runnable-track]:h-px [&::-webkit-slider-runnable-track]:bg-[#a0a0a0] [&::-webkit-slider-thumb]:-mt-[6px] [&::-webkit-slider-thumb]:h-[13px] [&::-webkit-slider-thumb]:w-[5px] [&::-webkit-slider-thumb]:appearance-none [&::-webkit-slider-thumb]:border [&::-webkit-slider-thumb]:border-[#909090] [&::-webkit-slider-thumb]:bg-[#f4f4f4]"
        />
        <button aria-label="放大" className="ml-0.5">
          <svg width="9" height="9" viewBox="0 0 9 9" stroke="#808080">
            <path d="M4.500 0v9M0 4.500h9" />
          </svg>
        </button>
      </div>
    </div>
    <output className="pl-2 text-xs whitespace-pre text-[#444]">-55.71 , 1348.01 , 3000.00</output>
    <div className="ml-auto flex items-center gap-1.5">
      <Tool icon="workplane" />
      <Tool icon="snapCorner" active />
      <button aria-label="捕捉设置" className="-mx-1 w-3">
        <svg width="7" height="5" viewBox="0 0 7 5" fill="none" stroke="#444">
          <path d="M.500 4.500l3-4 3 4" />
        </svg>
      </button>
      <Tool icon="snapPoint" active />
      <Tool icon="snapAngle" active />
      <Tool icon="ortho" />
      <Tool icon="grid" />
      <Tool icon="lockAxis" />
      <Tool icon="gear" />
    </div>
  </footer>
);

const App = () => (
  <div className="flex h-screen flex-col overflow-hidden bg-[#dadada] font-['Open_Sans','Noto_Sans_CJK_SC',sans-serif]">
    <div className="flex min-h-0 flex-1">
      <div className="flex min-w-0 flex-1 flex-col">
        <div className="h-2 shrink-0 bg-black" />
        <TitleBar />
        <nav className="flex h-[26px] shrink-0 items-center bg-[#dadbdd] pr-3 text-xs text-[#333]">
          <button className="h-full w-[70px] pt-0.5">开始</button>
          <button className="h-full w-24 bg-white pt-0.5">自定义构件</button>
          <WindowButtons className="text-[#333]" gap="gap-2.5" />
        </nav>
        <Ribbon />
        <div className="flex min-h-0 flex-1 bg-[#dcdcdc]">
          <ProjectBrowser />
          <Viewport />
          <Properties />
        </div>
        <CommandBar />
        <StatusBar />
      </div>

      {/* window behind, visible along the right edge */}
      <div className="flex w-2 shrink-0 flex-col border-l-2 border-white bg-[#f4f5f9]">
        <div className="h-[52px] border-b border-[#dedede] bg-white" />
        <div className="h-14 border-b border-[#dedede] bg-white" />
        <div className="h-[45px] border-b border-[#dedede] bg-white" />
        <div className="h-[62px] border-b border-[#cfd2d8]" />
        <div className="mt-auto h-[30px] bg-white" />
      </div>
    </div>
    <div className="flex h-2 shrink-0 items-end bg-linear-to-r from-[#d6d6d6] from-20% via-[#dccfd0] via-50% to-[#d8dadb] to-90%">
      <span className="ml-8 h-0.5 w-3 rounded-t-full bg-[#c0393b]" />
      <span className="ml-auto h-full w-[52%] bg-linear-to-r from-transparent via-[#cddde8] via-20% to-transparent to-80%" />
    </div>
  </div>
);

export default App;
